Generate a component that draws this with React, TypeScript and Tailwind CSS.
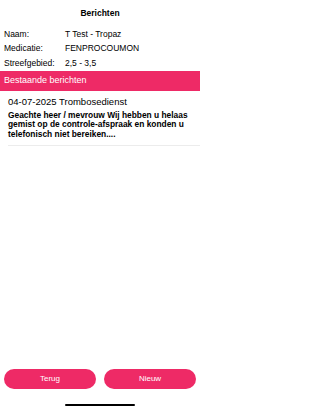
import React from 'react';

const rows = [
  { label: 'Naam:', value: 'T Test - Tropaz' },
  { label: 'Medicatie:', value: 'FENPROCOUMON' },
  { label: 'Streefgebied:', value: '2,5 - 3,5' },
];

export default function App() {
  return (
    <div
      className="relative flex h-[411px] w-[200px] flex-col bg-white text-black"
      style={{ fontFamily: '"Liberation Sans", Arial, sans-serif' }}
    >
      {/* Title */}
      <div className="flex h-[26px] items-center justify-center pt-[1px] text-[8.5px] font-bold">Berichten</div>

      {/* Patient info */}
      <div className="flex flex-col pt-[1px]">
        {rows.map((r) => (
          <div key={r.label} className="flex h-[14.5px] items-center px-[4px] text-[8.5px]">
            <span className="w-[61px]">{r.label}</span>
            <span>{r.value}</span>
          </div>
        ))}
      </div>

      {/* Section header */}
      <div className="flex h-[20px] items-center bg-[#ee2a66] px-[4px] text-[9px] text-white">
        Bestaande berichten
      </div>

      {/* Message */}
      <div className="ml-[8px] border-b border-[#ececec] pb-[6px] pr-[6px] pt-[5px]">
        <div className="text-[9.5px] leading-[12px]">04-07-2025 Trombosedienst</div>
        <div className="mt-[3px] text-[8.4px] font-bold leading-[9.5px]">
          Geachte heer / mevrouw Wij hebben u helaas gemist op de controle-afspraak en konden u telefonisch niet bereiken....
        </div>
      </div>

      <div className="flex-1" />

      {/* Buttons */}
      <div className="flex gap-[8px] px-[4px] pb-[22px]">
        <button className="h-[20px] flex-1 rounded-full bg-[#ee2a66] text-[8px] text-white">Terug</button>
        <button className="h-[20px] flex-1 rounded-full bg-[#ee2a66] text-[8px] text-white">Nieuw</button>
      </div>

      {/* Home indicator */}
      <div className="absolute bottom-[5px] left-1/2 h-[2.5px] w-[70px] -translate-x-1/2 rounded-full bg-black" />
    </div>
  );
}
